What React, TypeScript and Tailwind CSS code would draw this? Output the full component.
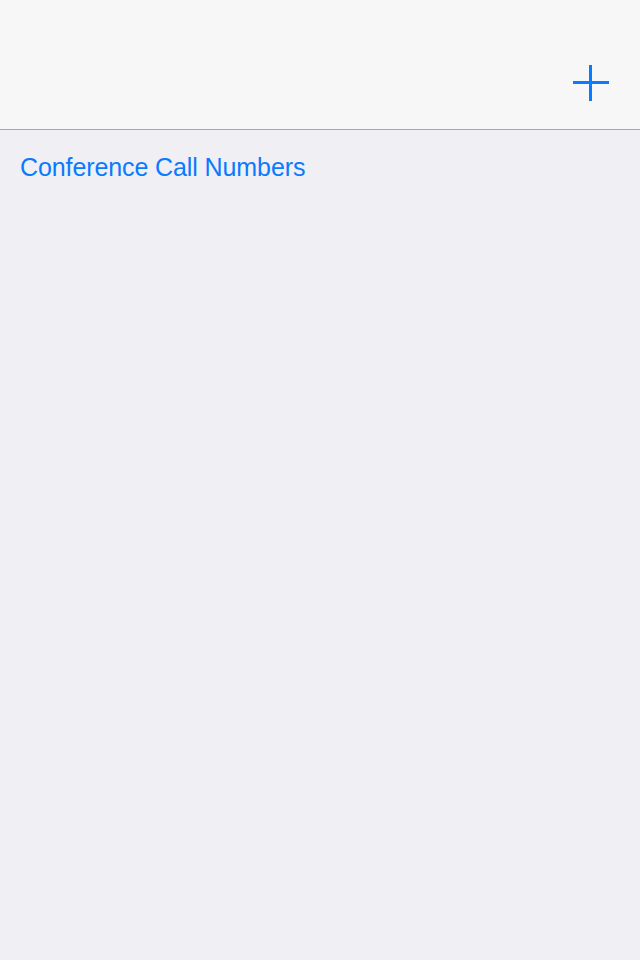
export default function App() {
  return (
    <div className="h-[960px] w-[640px] bg-[#efeff4] font-['Liberation_Sans',Arial,sans-serif]">
      <header className="flex h-[130px] items-end justify-end border-b border-[#a7a7aa] bg-[#f7f7f7] pb-[28px] pr-[31px]">
        <button className="relative h-[36px] w-[36px]" aria-label="Add">
          <span className="absolute left-0 top-[16px] h-[3px] w-[36px] bg-[#0a7aff]" />
          <span className="absolute left-[16px] top-0 h-[36px] w-[3px] bg-[#0a7aff]" />
        </button>
      </header>
      <div className="px-5 pt-[22px]">
        <span className="text-[25px] leading-[30px] tracking-[-0.1px] text-[#0a7aff]">Conference Call Numbers</span>
      </div>
    </div>
  );
}
